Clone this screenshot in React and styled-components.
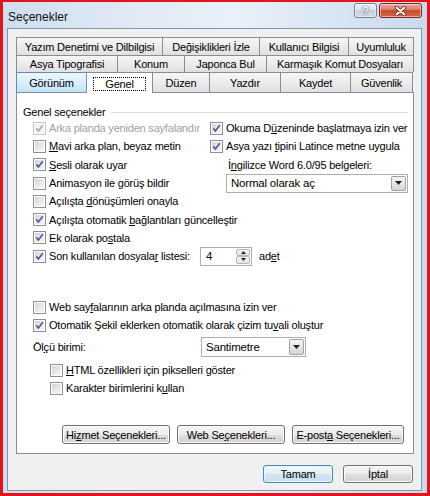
import React from 'react';
import styled, { createGlobalStyle, css } from 'styled-components';

const GlobalStyle = createGlobalStyle`
  html, body { margin: 0; padding: 0; }
  body {
    font-family: "Liberation Sans", Arial, sans-serif;
    font-size: 11px;
    letter-spacing: -0.2px;
    color: #000;
  }
`;

const Screen = styled.div`
  width: 430px;
  height: 496px;
  box-sizing: border-box;
  border-style: solid;
  border-color: #e5121b;
  border-width: 2px 3px 3px 3px;
  background: #e5121b;
`;

const Window = styled.div`
  height: 100%;
  display: flex;
  flex-direction: column;
  background: linear-gradient(90deg, #cfdeef 0%, #e0eaf5 30%, #e9f0f9 55%, #d7e4f2 80%, #c9d9ec 100%);
`;

const TitleBar = styled.div`
  height: 26px;
  flex: none;
  display: flex;
  align-items: center;
  padding: 0 5px;
`;

const Title = styled.div`
  flex: 1;
  font-size: 12px;
  letter-spacing: 0;
  color: #111;
  padding-top: 3px;
`;

const CaptionButtons = styled.div`
  align-self: flex-start;
  margin-top: 1px;
  display: flex;
  gap: 2px;
`;

const CaptionButton = styled.div`
  width: ${p => p.$w}px;
  height: 15px;
  box-sizing: border-box;
  border: 1px solid ${p => (p.$close ? '#7a2c1f' : '#78828f')};
  border-radius: 3px;
  display: flex;
  align-items: center;
  justify-content: center;
  box-shadow: inset 0 0 0 1px rgba(255, 255, 255, 0.45);
  background: ${p =>
    p.$close
      ? 'linear-gradient(#e9a899 0%, #dc7c66 45%, #c84a30 50%, #d4664b 100%)'
      : 'linear-gradient(#eef3f8 0%, #dbe3ec 45%, #c5d0dc 50%, #d2dce7 100%)'};
  color: #fff;
  font-size: 12px;
  font-weight: bold;
  text-shadow: 0 0 1px #3a4452, 0 0 1px #3a4452;
`;

const Client = styled.div`
  flex: 1;
  margin: 0 5px 3px 4px;
  box-sizing: border-box;
  border: 1px solid #8797ab;
  background: #f0f0f0;
  padding: 8px 7px 7px 8px;
  display: flex;
  flex-direction: column;
`;

const TabRow = styled.div`
  display: flex;
  height: ${p => p.$h}px;
  position: relative;
  z-index: ${p => (p.$front ? 2 : 1)};
`;

const Tab = styled.div`
  width: ${p => p.$w}px;
  box-sizing: border-box;
  border: 1px solid #898c95;
  border-right: none;
  border-bottom: none;
  display: flex;
  align-items: center;
  justify-content: center;
  background: linear-gradient(#f6f6f6 0%, #ececec 50%, #e0e0e0 100%);
  white-space: nowrap;
  &:last-child {
    border-right: 1px solid #898c95;
  }
  ${p =>
    p.$hover &&
    css`
      border-color: #5b8fb8;
      background: linear-gradient(#edf7fd 0%, #d8effc 50%, #bfe3f7 100%);
    `}
  ${p =>
    p.$active &&
    css`
      background: #fff;
      height: calc(100% + 1px);
      border-right: 1px solid #898c95;
      margin-right: -1px;
      position: relative;
      z-index: 1;
    `}
`;

const FocusRing = styled.span`
  width: calc(100% - 12px);
  box-sizing: border-box;
  text-align: center;
  border: 1px dotted #000;
  line-height: 12px;
  margin-top: 2px;
`;

const Panel = styled.div`
  height: 362px;
  flex: none;
  box-sizing: border-box;
  border: 1px solid #898c95;
  background: #fff;
  padding: 12px 5px 9px 6px;
  display: flex;
  flex-direction: column;
`;

const GroupHeader = styled.div`
  display: flex;
  align-items: center;
  height: 14px;
  &::after {
    content: '';
    flex: 1;
    height: 1px;
    margin-left: 6px;
    background: #d5dfe5;
  }
`;

const Options = styled.div`
  padding-left: 10px;
  display: flex;
  flex-direction: column;
`;

const Columns = styled.div`
  display: flex;
`;

const Column = styled.div`
  width: ${p => (p.$w ? `${p.$w}px` : 'auto')};
  flex: ${p => (p.$w ? 'none' : 1)};
  display: flex;
  flex-direction: column;
  padding-left: ${p => p.$indent || 0}px;
`;

const Row = styled.div`
  height: ${p => p.$h || 18.3}px;
  margin-top: ${p => p.$mt || 0}px;
  padding-left: ${p => p.$indent || 0}px;
  display: flex;
  align-items: center;
  white-space: nowrap;
  color: ${p => (p.$disabled ? '#a0a0a0' : '#000')};
`;

const Label = styled.span`
  width: ${p => (p.$w ? `${p.$w}px` : 'auto')};
  flex: none;
  padding-left: ${p => p.$pl || 0}px;
`;

const Key = styled.span`
  text-decoration: underline;
  text-underline-offset: 1px;
`;

const Box = styled.span`
  width: 13px;
  height: 13px;
  flex: none;
  box-sizing: border-box;
  margin-right: 3px;
  border: 1px solid ${p => (p.$disabled ? '#c4c4c4' : '#8e8f8f')};
  box-shadow: inset 0 0 0 1px #fff;
  background: ${p =>
    p.$disabled ? '#f4f4f4' : 'linear-gradient(135deg, #cdd1d6 0%, #e8e9eb 55%, #f8f8f8 100%)'};
  display: flex;
`;

const CheckBox = ({ checked, disabled }) => (
  <Box $disabled={disabled}>
    {checked && (
      <svg width="11" height="11" viewBox="0 0 11 11">
        <path
          d="M2.3 5.4 L4.4 8 L8.8 2.3"
          fill="none"
          stroke={disabled ? '#a9a9a9' : '#4b5f8f'}
          strokeWidth="1.7"
        />
      </svg>
    )}
  </Box>
);

const Check = ({ checked, disabled, children, ...rest }) => (
  <Row $disabled={disabled} {...rest}>
    <CheckBox checked={checked} disabled={disabled} />
    <span>{children}</span>
  </Row>
);

const Combo = styled.div`
  width: ${p => p.$w}px;
  height: ${p => p.$h || 19}px;
  flex: none;
  margin-left: ${p => p.$ml || 0}px;
  box-sizing: border-box;
  border: 1px solid #abadb3;
  background: #fff;
  padding: 1px;
  display: flex;
  align-items: stretch;
`;

const ComboText = styled.span`
  flex: 1;
  display: flex;
  align-items: center;
  padding-left: 3px;
  font-size: 11.5px;
`;

const DropButton = styled.span`
  width: 15px;
  box-sizing: border-box;
  border: 1px solid #9ea2a8;
  border-radius: 2px;
  background: linear-gradient(#f4f4f4 0%, #e6e6e6 50%, #d6d6d6 100%);
  display: flex;
  align-items: center;
  justify-content: center;
`;

const Arrow = ({ up }) => (
  <svg width="7" height="4" viewBox="0 0 7 4">
    <path d={up ? 'M0 4 L3.5 0 L7 4 Z' : 'M0 0 L7 0 L3.5 4 Z'} fill="#222" />
  </svg>
);

const Select = ({ w, h, ml, children }) => (
  <Combo $w={w} $h={h} $ml={ml}>
    <ComboText>{children}</ComboText>
    <DropButton>
      <Arrow />
    </DropButton>
  </Combo>
);

const SpinBox = styled.div`
  width: 52px;
  height: 19px;
  flex: none;
  box-sizing: border-box;
  border: 1px solid #abadb3;
  background: #fff;
  padding: 1px;
  display: flex;
`;

const SpinValue = styled.span`
  flex: 1;
  display: flex;
  align-items: center;
  padding-left: 4px;
  font-size: 11.5px;
`;

const SpinButtons = styled.span`
  width: 14px;
  display: flex;
  flex-direction: column;
`;

const SpinHalf = styled.span`
  flex: 1;
  box-sizing: border-box;
  border: 1px solid #b4b7bc;
  border-radius: 2px;
  background: linear-gradient(#f7f7f7, #e3e3e3);
  display: flex;
  align-items: center;
  justify-content: center;
  & svg {
    width: 5px;
    height: 3px;
  }
`;

const ButtonBar = styled.div`
  margin-top: auto;
  display: flex;
  justify-content: flex-end;
  gap: 7px;
  padding-right: 4px;
`;

const Footer = styled.div`
  margin-top: 11px;
  display: flex;
  justify-content: flex-end;
  gap: 10px;
  padding-right: 1px;
`;

const Button = styled.div`
  width: ${p => p.$w}px;
  height: ${p => p.$h || 19}px;
  box-sizing: border-box;
  border: 1px solid ${p => (p.$default ? '#4a8ab8' : '#707070')};
  border-radius: 3px;
  box-shadow: inset 0 0 0 1px ${p => (p.$default ? '#e6f4fc' : '#fbfbfb')};
  background: ${p =>
    p.$default
      ? 'linear-gradient(#f2f8fc 0%, #e4f0f8 50%, #d2e6f3 50%, #c7dfef 100%)'
      : 'linear-gradient(#f4f4f4 0%, #ececec 50%, #dedede 50%, #d2d2d2 100%)'};
  display: flex;
  align-items: center;
  justify-content: center;
  white-space: nowrap;
`;

const leftRows = [
  { checked: true, disabled: true, text: 'Arka planda yeniden sayfalandır' },
  { text: <><Key>M</Key>avi arka plan, beyaz metin</> },
  { checked: true, text: <><Key>S</Key>esli olarak uyar</> },
  { text: <>Animasyon ile <Key>g</Key>örüş bildir</> },
  { text: <>Açılışta <Key>d</Key>önüşümleri onayla</> },
  { checked: true, text: <>Açılışta otomatik <Key>b</Key>ağlantıları güncelleştir</> },
  { checked: true, text: <>Ek olarak po<Key>s</Key>tala</> },
];

export default function App() {
  return (
    <Screen>
      <GlobalStyle />
      <Window>
        <TitleBar>
          <Title>Seçenekler</Title>
          <CaptionButtons>
            <CaptionButton $w={23}>?</CaptionButton>
            <CaptionButton $w={43} $close>
              <svg width="13" height="10" viewBox="0 0 13 10">
                <path d="M2.5 1.5 L10.5 8.5 M10.5 1.5 L2.5 8.5" stroke="#5a2418" strokeWidth="3.6" strokeLinecap="round" />
                <path d="M2.5 1.5 L10.5 8.5 M10.5 1.5 L2.5 8.5" stroke="#fff" strokeWidth="2" strokeLinecap="round" />
              </svg>
            </CaptionButton>
          </CaptionButtons>
        </TitleBar>

        <Client>
          <TabRow $h={18}>
            <Tab $w={146}>Yazım Denetimi ve Dilbilgisi</Tab>
            <Tab $w={97}>Değişiklikleri İzle</Tab>
            <Tab $w={89}>Kullanıcı Bilgisi</Tab>
            <Tab $w={66}>Uyumluluk</Tab>
          </TabRow>
          <TabRow $h={17}>
            <Tab $w={101}>Asya Tipografisi</Tab>
            <Tab $w={67}>Konum</Tab>
            <Tab $w={82}>Japonca Bul</Tab>
            <Tab $w={148}>Karmaşık Komut Dosyaları</Tab>
          </TabRow>
          <TabRow $h={20} $front>
            <Tab $w={70} $hover>Görünüm</Tab>
            <Tab $w={67} $active>
              <FocusRing>Genel</FocusRing>
            </Tab>
            <Tab $w={57}>Düzen</Tab>
            <Tab $w={71}>Yazdır</Tab>
            <Tab $w={70}>Kaydet</Tab>
            <Tab $w={63}>Güvenlik</Tab>
          </TabRow>

          <Panel>
            <GroupHeader>Genel seçenekler</GroupHeader>
            <Options>
              <Columns>
                <Column $w={176}>
                  {leftRows.map((r, i) => (
                    <Check key={i} checked={r.checked} disabled={r.disabled}>
                      {r.text}
                    </Check>
                  ))}
                  <Row>
                    <CheckBox checked />
                    <Label $w={151}>
                      Son kullanılan dosyala<Key>r</Key> listesi:
                    </Label>
                    <SpinBox>
                      <SpinValue>4</SpinValue>
                      <SpinButtons>
                        <SpinHalf><Arrow up /></SpinHalf>
                        <SpinHalf><Arrow /></SpinHalf>
                      </SpinButtons>
                    </SpinBox>
                    <Label $pl={7}>
                      ad<Key>e</Key>t
                    </Label>
                  </Row>
                </Column>
                <Column $indent={1}>
                  <Check checked>
                    Okuma D<Key>ü</Key>zeninde başlatmaya izin ver
                  </Check>
                  <Check checked>
                    Asya yazı <Key>t</Key>ipini Latince metne uygula
                  </Check>
                  <Row $indent={18}>
                    <span>
                      İ<Key>n</Key>gilizce Word 6.0/95 belgeleri:
                    </span>
                  </Row>
                  <Row>
                    <Select w={182} ml={16}>Normal olarak aç</Select>
                  </Row>
                </Column>
              </Columns>

              <Check $mt={33} $h={18}>
                Web say<Key>f</Key>alarının arka planda açılmasına izin ver
              </Check>
              <Check checked $h={18}>
                Otomatik Şekil eklerken otomatik olarak çizim tu<Key>v</Key>ali oluştur
              </Check>
              <Row $h={20} $mt={3}>
                <Label $w={168}>
                  Öl<Key>ç</Key>ü birimi:
                </Label>
                <Select w={105} h={20}>Santimetre</Select>
              </Row>
              <Check $h={18} $mt={4} $indent={17}>
                <Key>H</Key>TML özellikleri için pikselleri göster
              </Check>
              <Check $h={18} $indent={17}>
                Karakter birimlerini k<Key>u</Key>llan
              </Check>
            </Options>

            <ButtonBar>
              <Button $w={108}>
                <span>
                  Hi<Key>z</Key>met Seçenekleri...
                </span>
              </Button>
              <Button $w={108}>
                <span>
                  Web Se<Key>ç</Key>enekleri...
                </span>
              </Button>
              <Button $w={112}>
                <span>
                  E-post<Key>a</Key> Seçenekleri...
                </span>
              </Button>
            </ButtonBar>
          </Panel>

          <Footer>
            <Button $w={70} $h={18} $default>Tamam</Button>
            <Button $w={70} $h={18}>İptal</Button>
          </Footer>
        </Client>
      </Window>
    </Screen>
  );
}
